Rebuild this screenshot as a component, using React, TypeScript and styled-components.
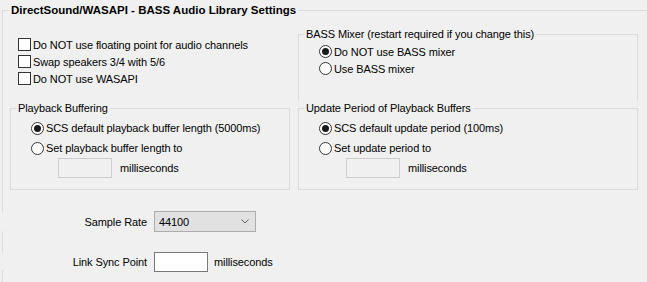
import React from "react";
import styled, { createGlobalStyle } from "styled-components";

const Global = createGlobalStyle`
  html, body { margin: 0; padding: 0; background: #f0f0f0; }
  body {
    font-family: "Liberation Sans", Arial, sans-serif;
    font-size: 11px;
    letter-spacing: -0.1px;
    color: #000;
  }
  * { box-sizing: border-box; }
`;

const Page = styled.div`
  width: 647px;
  height: 282px;
  overflow: hidden;
  padding-top: 3px;
  background: #f0f0f0;
`;

const OuterGroup = styled.fieldset`
  margin: 0 0 0 2px;
  padding: 0;
  width: 700px;
  height: 300px;
  min-width: 0;
  border: 1px solid #dcdcdc;
  border-right: none;
  border-bottom: none;
`;

const OuterLegend = styled.legend`
  margin-left: 6px;
  padding: 0 2px;
  font-size: 11.5px;
  font-weight: bold;
  letter-spacing: 0;
  line-height: 14px;
`;

const OuterBody = styled.div`
  padding-left: 7px;
`;

const Columns = styled.div<{ $top: number; $h: number }>`
  display: grid;
  grid-template-columns: 280px 340px;
  column-gap: 8px;
  margin-top: ${(p) => p.$top}px;
  height: ${(p) => p.$h}px;
`;

const CheckList = styled.div`
  display: flex;
  flex-direction: column;
  padding: 9px 0 0 8px;
`;

const Group = styled.fieldset<{ $h: number; $open?: boolean }>`
  margin: 0;
  padding: 0;
  min-width: 0;
  height: ${(p) => p.$h}px;
  border: 1px solid #dcdcdc;
  ${(p) => (p.$open ? "border-bottom: none;" : "")}
`;

const GroupLegend = styled.legend`
  margin-left: 5px;
  padding: 0 2px;
  line-height: 14px;
  font-size: 11px;
`;

const GroupBody = styled.div<{ $top: number }>`
  display: flex;
  flex-direction: column;
  padding: ${(p) => p.$top}px 0 0 20px;
`;

const OptionRow = styled.label<{ $h: number }>`
  display: flex;
  align-items: center;
  gap: 2px;
  height: ${(p) => p.$h}px;
  white-space: nowrap;
  cursor: default;
`;

const CheckBox = styled.span`
  width: 13px;
  height: 13px;
  flex: none;
  border: 1px solid #333;
  background: #fff;
`;

const Radio = styled.span<{ $on?: boolean }>`
  width: 13px;
  height: 13px;
  flex: none;
  border: 1px solid #333;
  border-radius: 50%;
  background: #fff;
  display: flex;
  align-items: center;
  justify-content: center;
  &::after {
    content: "";
    width: 7px;
    height: 7px;
    border-radius: 50%;
    background: ${(p) => (p.$on ? "#1a1a1a" : "transparent")};
  }
`;

const FieldRow = styled.div`
  display: flex;
  align-items: center;
  gap: 8px;
  height: 20px;
  padding-left: 27px;
  white-space: nowrap;
`;

const TextBox = styled.div<{ $disabled?: boolean }>`
  width: 54px;
  height: 20px;
  flex: none;
  border: 1px solid ${(p) => (p.$disabled ? "#cccccc" : "#7a7a7a")};
  background: ${(p) => (p.$disabled ? "#f0f0f0" : "#ffffff")};
`;

const Form = styled.div`
  display: grid;
  grid-template-columns: 137px auto;
  column-gap: 7px;
  row-gap: 19px;
  margin-top: 21px;
  justify-content: start;
`;

const FormLabel = styled.div<{ $h: number }>`
  margin-left: -8px;
  height: ${(p) => p.$h}px;
  align-self: center;
  display: flex;
  align-items: center;
  justify-content: flex-end;
  background: #f0f0f0;
  white-space: nowrap;
`;

const FormControl = styled.div`
  display: flex;
  align-items: center;
  gap: 6px;
  height: 21px;
  white-space: nowrap;
`;

const Select = styled.div`
  width: 102px;
  height: 21px;
  display: flex;
  align-items: center;
  justify-content: space-between;
  padding: 0 6px 0 4px;
  border: 1px solid #adadad;
  background: #e1e1e1;
`;

const Chevron = () => (
  <svg width="8" height="5" viewBox="0 0 8 5" aria-hidden="true">
    <polyline points="0.5,0.5 4,4 7.5,0.5" fill="none" stroke="#606060" strokeWidth="1" />
  </svg>
);

export default function App() {
  return (
    <>
      <Global />
      <Page>
        <OuterGroup>
          <OuterLegend>DirectSound/WASAPI - BASS Audio Library Settings</OuterLegend>
          <OuterBody>
            <Columns $top={10} $h={74}>
              <CheckList>
                <OptionRow $h={17}>
                  <CheckBox />
                  Do NOT use floating point for audio channels
                </OptionRow>
                <OptionRow $h={17}>
                  <CheckBox />
                  Swap speakers 3/4 with 5/6
                </OptionRow>
                <OptionRow $h={17}>
                  <CheckBox />
                  Do NOT use WASAPI
                </OptionRow>
              </CheckList>
              <Group $h={74} $open>
                <GroupLegend>BASS Mixer (restart required if you change this)</GroupLegend>
                <GroupBody $top={2}>
                  <OptionRow $h={17}>
                    <Radio $on />
                    Do NOT use BASS mixer
                  </OptionRow>
                  <OptionRow $h={17}>
                    <Radio />
                    Use BASS mixer
                  </OptionRow>
                </GroupBody>
              </Group>
            </Columns>
            <Columns $top={0} $h={89}>
              <Group $h={89}>
                <GroupLegend>Playback Buffering</GroupLegend>
                <GroupBody $top={3}>
                  <OptionRow $h={20}>
                    <Radio $on />
                    SCS default playback buffer length (5000ms)
                  </OptionRow>
                  <OptionRow $h={20}>
                    <Radio />
                    Set playback buffer length to
                  </OptionRow>
                  <FieldRow>
                    <TextBox $disabled />
                    milliseconds
                  </FieldRow>
                </GroupBody>
              </Group>
              <Group $h={89}>
                <GroupLegend>Update Period of Playback Buffers</GroupLegend>
                <GroupBody $top={3}>
                  <OptionRow $h={20}>
                    <Radio $on />
                    SCS default update period (100ms)
                  </OptionRow>
                  <OptionRow $h={20}>
                    <Radio />
                    Set update period to
                  </OptionRow>
                  <FieldRow>
                    <TextBox $disabled />
                    milliseconds
                  </FieldRow>
                </GroupBody>
              </Group>
            </Columns>
            <Form>
              <FormLabel $h={19}>Sample Rate</FormLabel>
              <FormControl>
                <Select>
                  <span>44100</span>
                  <Chevron />
                </Select>
              </FormControl>
              <FormLabel $h={17}>Link Sync Point</FormLabel>
              <FormControl>
                <TextBox />
                milliseconds
              </FormControl>
            </Form>
          </OuterBody>
        </OuterGroup>
      </Page>
    </>
  );
}
